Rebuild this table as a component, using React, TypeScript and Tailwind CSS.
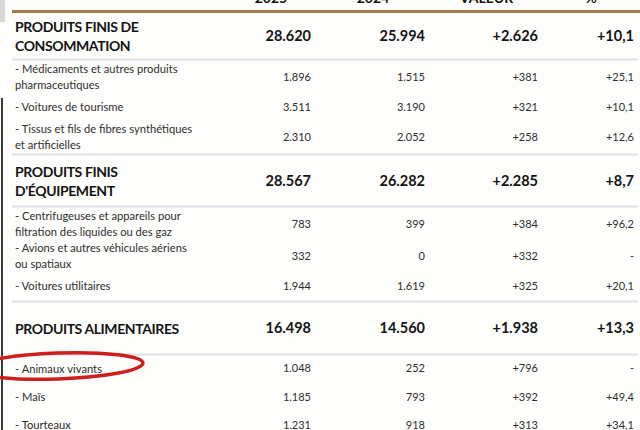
import React from 'react';

type Row = {
  label: string[];
  v: [string, string, string, string];
  bold?: boolean;
  h: number;
  sepAfter?: boolean;
};

const rows: Row[] = [
  { label: ['PRODUITS FINIS DE', 'CONSOMMATION'], v: ['28.620', '25.994', '+2.626', '+10,1'], bold: true, h: 45, sepAfter: true },
  { label: ['- Médicaments et autres produits', 'pharmaceutiques'], v: ['1.896', '1.515', '+381', '+25,1'], h: 32 },
  { label: ['- Voitures de tourisme'], v: ['3.511', '3.190', '+321', '+10,1'], h: 28 },
  { label: ['- Tissus et fils de fibres synthétiques', 'et artificielles'], v: ['2.310', '2.052', '+258', '+12,6'], h: 32, sepAfter: true },
  { label: ['PRODUITS FINIS', "D'ÉQUIPEMENT"], v: ['28.567', '26.282', '+2.285', '+8,7'], bold: true, h: 49, sepAfter: true },
  { label: ['- Centrifugeuses et appareils pour', 'filtration des liquides ou des gaz'], v: ['783', '399', '+384', '+96,2'], h: 32 },
  { label: ['- Avions et autres véhicules aériens', 'ou spatiaux'], v: ['332', '0', '+332', '-'], h: 32 },
  { label: ['- Voitures utilitaires'], v: ['1.944', '1.619', '+325', '+20,1'], h: 28, sepAfter: true },
  { label: ['PRODUITS ALIMENTAIRES'], v: ['16.498', '14.560', '+1.938', '+13,3'], bold: true, h: 50, sepAfter: true },
  { label: ['- Animaux vivants'], v: ['1.048', '252', '+796', '-'], h: 25 },
  { label: ['- Maïs'], v: ['1.185', '793', '+392', '+49,4'], h: 32 },
  { label: ['- Tourteaux'], v: ['1.231', '918', '+313', '+34,1'], h: 24 },
];

function Separator() {
  return <div className="shrink-0 h-[3px] ml-[7px] mr-[2px] bg-gradient-to-b from-[#f1f2f4] via-[#e1e3e7] to-[#f1f2f4]" />;
}

export default function App() {
  return (
    <div className="relative w-[640px] h-[430px] overflow-hidden bg-[#fdfdfb] flex" style={{ fontFamily: 'Lato, "Open Sans", sans-serif' }}>
      {/* left scan edge */}
      <div className="w-[5px] flex flex-col shrink-0">
        <div className="shrink-0 h-[22px] bg-[#d8d8d8]" />
        <div className="shrink-0 h-[76px]" />
        <div className="flex-1 border-l-2 border-[#3a3a3a] ml-[1px]" />
      </div>

      <div className="flex-1 flex flex-col">
        {/* header (cut off by the crop) */}
        <div className="shrink-0 h-[10px] overflow-hidden">
          <div className="grid grid-cols-[216px_90px_114px_113px_96px] pl-[5px] -mt-[9px]">
            <div />
            {['2025', '2024', 'VALEUR', '%'].map((t) => (
              <div key={t} className="text-center text-[14px] font-bold leading-[14px] text-[#111]">{t}</div>
            ))}
          </div>
        </div>
        <div className="shrink-0 h-[3px] ml-[7px] -mr-[4px] bg-[#9c7d4e]" />

        {rows.map((r, i) => (
          <React.Fragment key={i}>
            <div className="shrink-0 grid grid-cols-[206px_90px_114px_113px_96px] pl-[10px] items-center" style={{ height: r.h }}>
              <div className={r.bold ? 'text-[14px] font-bold leading-[19px] text-[#141414] tracking-[-0.4px]' : 'text-[11.2px] leading-[16px] text-[#2e2e2e]'}>
                {r.label.map((l) => (
                  <div key={l} className="whitespace-nowrap">{l}</div>
                ))}
              </div>
              {r.v.map((v, j) => (
                <div key={j} className={`text-right ${r.bold ? 'text-[14.5px] font-bold text-[#141414]' : 'text-[11px] text-[#2e2e2e]'}`}>{v}</div>
              ))}
            </div>
            {r.sepAfter && <Separator />}
          </React.Fragment>
        ))}
      </div>

      {/* hand-drawn red circle */}
      <svg className="absolute left-0 top-[340px]" width="160" height="50" viewBox="0 0 160 50">
        <ellipse cx="58" cy="26" rx="85" ry="13" fill="none" stroke="#cf1e1e" strokeWidth="3.5" transform="rotate(-2 58 26)" />
      </svg>
    </div>
  );
}
